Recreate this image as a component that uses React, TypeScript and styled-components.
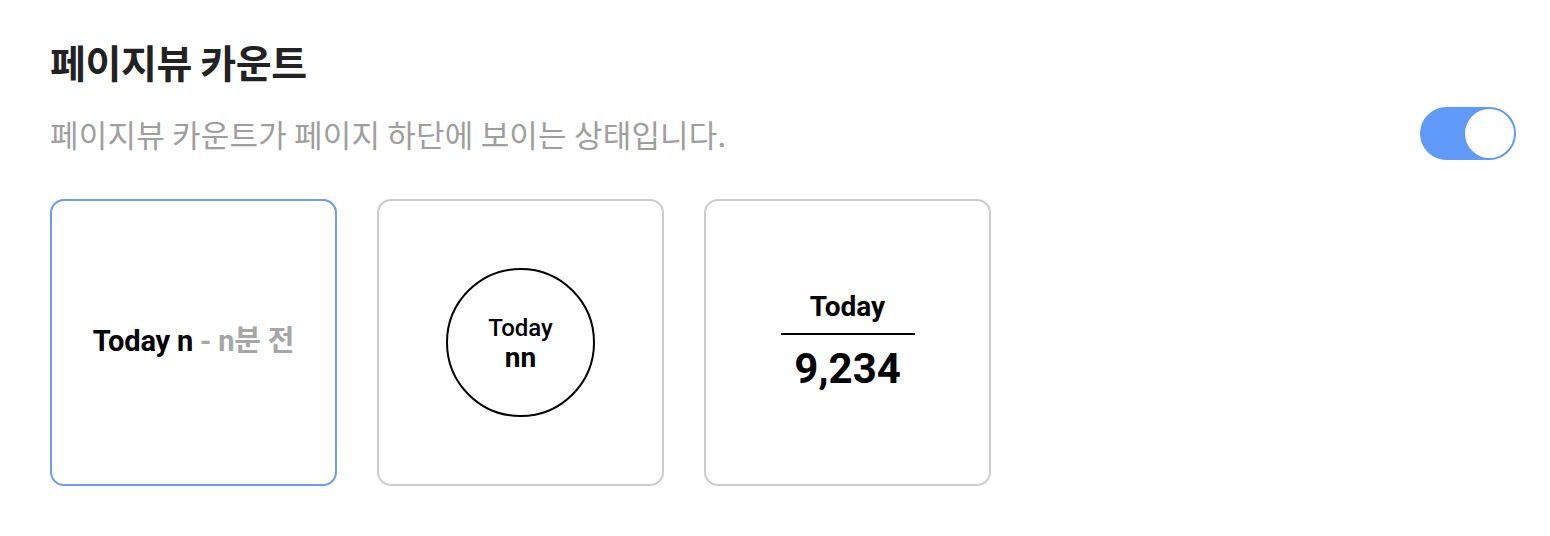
import React, { useState } from "react";
import styled, { createGlobalStyle } from "styled-components";

const GlobalStyle = createGlobalStyle`
  html, body {
    margin: 0;
    padding: 0;
    background: #ffffff;
  }
  body {
    font-family: "Noto Sans CJK KR", "Noto Sans", sans-serif;
  }
`;

const Section = styled.section`
  padding: 36px 34px 0 50px;
`;

const Title = styled.h2`
  margin: 0;
  font-size: 39px;
  font-weight: 700;
  line-height: 50px;
  color: #222222;
  letter-spacing: -0.4px;
`;

const DescRow = styled.div`
  display: flex;
  align-items: center;
  justify-content: space-between;
  margin-top: 21px;
`;

const Desc = styled.p`
  margin: 0;
  font-size: 31px;
  line-height: 44px;
  color: #9e9e9e;
  letter-spacing: 0.2px;
`;

const Toggle = styled.button<{ on: boolean }>`
  position: relative;
  width: 96px;
  height: 53px;
  padding: 0;
  border: none;
  border-radius: 27px;
  background: ${(p) => (p.on ? "#6199f8" : "#d5d5d5")};
  cursor: pointer;
`;

const Knob = styled.span<{ on: boolean }>`
  position: absolute;
  top: 2px;
  left: ${(p) => (p.on ? "45px" : "2px")};
  width: 49px;
  height: 49px;
  border-radius: 50%;
  background: #ffffff;
`;

const Cards = styled.div`
  display: flex;
  gap: 40px;
  margin-top: 39px;
`;

const Card = styled.div<{ selected: boolean }>`
  box-sizing: border-box;
  width: 287px;
  height: 287px;
  border: 2px solid ${(p) => (p.selected ? "#6c9cf0" : "#cccccc")};
  border-radius: 14px;
  display: flex;
  align-items: center;
  justify-content: center;
  font-family: Roboto, "Noto Sans CJK KR", sans-serif;
  color: #000000;
  cursor: pointer;
`;

const InlineCount = styled.div`
  font-size: 29px;
  font-weight: 700;
  line-height: 34px;
  letter-spacing: -0.2px;
  margin-top: -4px;
`;

const Muted = styled.span`
  color: #a6a6a6;
`;

const Circle = styled.div`
  box-sizing: border-box;
  width: 149px;
  height: 149px;
  border: 2px solid #000000;
  border-radius: 50%;
  display: flex;
  flex-direction: column;
  align-items: center;
  justify-content: center;
`;

const CircleLabel = styled.div`
  font-size: 24px;
  font-weight: 500;
  line-height: 26px;
  margin-top: 4px;
`;

const CircleValue = styled.div`
  font-size: 28px;
  font-weight: 700;
  line-height: 34px;
`;

const Stack = styled.div`
  display: flex;
  flex-direction: column;
  align-items: center;
`;

const StackLabel = styled.div`
  font-size: 28px;
  font-weight: 700;
  line-height: 32px;
`;

const Divider = styled.div`
  width: 134px;
  height: 2px;
  background: #000000;
  margin: 10px 0 9px;
`;

const StackValue = styled.div`
  font-size: 42px;
  font-weight: 700;
  line-height: 50px;
`;

export default function App() {
  const [on, setOn] = useState(true);
  const [style, setStyle] = useState(0);

  return (
    <Section>
      <GlobalStyle />
      <Title>페이지뷰 카운트</Title>
      <DescRow>
        <Desc>페이지뷰 카운트가 페이지 하단에 보이는 상태입니다.</Desc>
        <Toggle on={on} onClick={() => setOn(!on)} aria-label="페이지뷰 카운트 표시">
          <Knob on={on} />
        </Toggle>
      </DescRow>
      <Cards>
        <Card selected={style === 0} onClick={() => setStyle(0)}>
          <InlineCount>
            Today n <Muted>- n분 전</Muted>
          </InlineCount>
        </Card>
        <Card selected={style === 1} onClick={() => setStyle(1)}>
          <Circle>
            <CircleLabel>Today</CircleLabel>
            <CircleValue>nn</CircleValue>
          </Circle>
        </Card>
        <Card selected={style === 2} onClick={() => setStyle(2)}>
          <Stack>
            <StackLabel>Today</StackLabel>
            <Divider />
            <StackValue>9,234</StackValue>
          </Stack>
        </Card>
      </Cards>
    </Section>
  );
}
